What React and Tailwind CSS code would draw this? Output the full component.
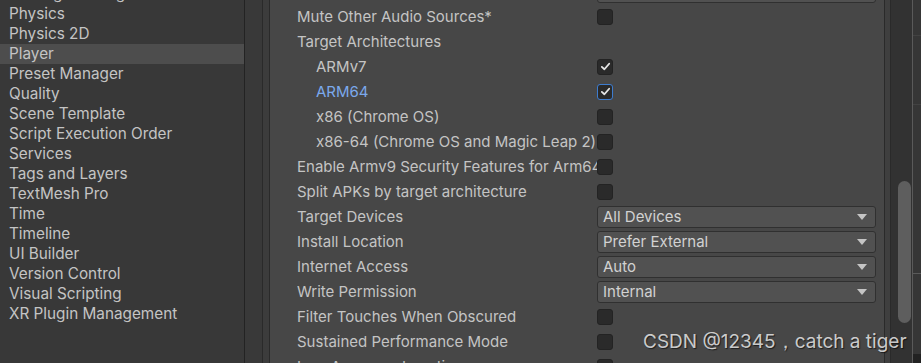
import React from 'react';

const menu = [
  'Package Manager',
  'Physics',
  'Physics 2D',
  'Player',
  'Preset Manager',
  'Quality',
  'Scene Template',
  'Script Execution Order',
  'Services',
  'Tags and Layers',
  'TextMesh Pro',
  'Time',
  'Timeline',
  'UI Builder',
  'Version Control',
  'Visual Scripting',
  'XR Plugin Management',
];

const rows = [
  { type: 'dropdown', label: '', value: '' },
  { type: 'check', label: 'Mute Other Audio Sources*' },
  { type: 'header', label: 'Target Architectures' },
  { type: 'check', label: 'ARMv7', indent: true, checked: true },
  { type: 'check', label: 'ARM64', indent: true, checked: true, focus: true },
  { type: 'check', label: 'x86 (Chrome OS)', indent: true },
  { type: 'check', label: 'x86-64 (Chrome OS and Magic Leap 2)', indent: true },
  { type: 'check', label: 'Enable Armv9 Security Features for Arm64' },
  { type: 'check', label: 'Split APKs by target architecture' },
  { type: 'dropdown', label: 'Target Devices', value: 'All Devices' },
  { type: 'dropdown', label: 'Install Location', value: 'Prefer External' },
  { type: 'dropdown', label: 'Internet Access', value: 'Auto' },
  { type: 'dropdown', label: 'Write Permission', value: 'Internal' },
  { type: 'check', label: 'Filter Touches When Obscured' },
  { type: 'check', label: 'Sustained Performance Mode' },
  { type: 'check', label: 'Low Accuracy Location' },
];

function Checkbox({ checked, focus }) {
  return (
    <div
      className={`w-4 h-4 rounded-[3px] bg-[#2a2a2a] border flex items-center justify-center ${
        focus ? 'border-[#3d7ccf]' : 'border-[#232323]'
      }`}
    >
      {checked && (
        <svg className="w-[11px] h-[11px]" viewBox="0 0 12 12" fill="none">
          <path d="M2 6.4 L4.8 9 L10 3" stroke="#e6e6e6" strokeWidth="2" strokeLinecap="round" strokeLinejoin="round" />
        </svg>
      )}
    </div>
  );
}

function Dropdown({ value }) {
  return (
    <div className="h-[22px] w-[279px] rounded-[3px] bg-[#515151] border border-[#303030] flex items-center justify-between pl-[5px] pr-[8px] text-[#d2d2d2]">
      <span>{value}</span>
      <svg className="w-[10px] h-[6px]" viewBox="0 0 10 6">
        <path d="M0 0 H10 L5 6 Z" fill="#c4c4c4" />
      </svg>
    </div>
  );
}

export default function App() {
  return (
    <div
      className="w-[921px] h-[363px] overflow-hidden flex bg-[#383838] text-[15px] leading-5"
      style={{ fontFamily: 'Inter, "Noto Sans", sans-serif' }}
    >
      {/* settings list */}
      <div className="w-[244px] shrink-0 bg-[#383838] text-[#c4c4c4] -mt-4 text-[15.3px]">
        {menu.map((m) => (
          <div
            key={m}
            className={`h-5 pl-[9px] flex items-center whitespace-nowrap ${m === 'Player' ? 'bg-[#4d4d4d]' : ''}`}
          >
            {m}
          </div>
        ))}
      </div>
      <div className="w-px shrink-0 bg-[#232323]" />
      <div className="w-[17px] shrink-0 bg-[#393939]" />
      <div className="w-px shrink-0 bg-[#2a2a2a]" />
      <div className="w-[6px] shrink-0 bg-[#3c3c3c]" />
      <div className="w-px shrink-0 bg-[#2a2a2a]" />

      {/* inspector */}
      <div className="w-[614px] shrink-0 bg-[#474747] text-[#c4c4c4] -mt-[21px] pl-[27px]">
        {rows.map((r, i) => (
          <div key={i} className="h-[25px] flex items-center">
            <div
              className={`w-[300px] shrink-0 overflow-hidden whitespace-nowrap ${r.indent ? 'pl-[19px]' : ''} ${
                r.focus ? 'text-[#7ba9ec]' : ''
              }`}
            >
              {r.label}
            </div>
            {r.type === 'check' && <Checkbox checked={r.checked} focus={r.focus} />}
            {r.type === 'dropdown' && <Dropdown value={r.value} />}
          </div>
        ))}
      </div>

      <div className="w-px shrink-0 bg-[#2a2a2a]" />
      <div className="w-[5px] shrink-0 bg-[#3f3f3f]" />
      <div className="w-px shrink-0 bg-[#2a2a2a]" />
      {/* scrollbar */}
      <div className="w-[21px] shrink-0 bg-[#323232] flex flex-col pl-[7px] pr-[1px] pt-[181px]">
        <div className="w-[13px] h-[142px] rounded-full bg-[#5e5e5e]" />
      </div>
      <div className="w-px shrink-0 bg-[#5a5a5a]" />
      <div className="flex-1 bg-[#363636] flex flex-col">
        <div className="h-[36px] border-b border-[#424242]" />
        <div className="h-[69px] border-b border-[#424242]" />
        <div className="h-[169px] border-b border-[#5a5a5a]" />
        <div className="flex-1" />
        <div className="h-[9px] bg-[#222222]" />
      </div>

      {/* watermark */}
      <div
        className="absolute left-[643px] top-[330px] text-[19px] leading-6 text-[#e8e8e8]/85 whitespace-nowrap"
        style={{ textShadow: '1px 1px 1px rgba(0,0,0,0.6)' }}
      >
        CSDN @12345，catch a tiger
      </div>
    </div>
  );
}
